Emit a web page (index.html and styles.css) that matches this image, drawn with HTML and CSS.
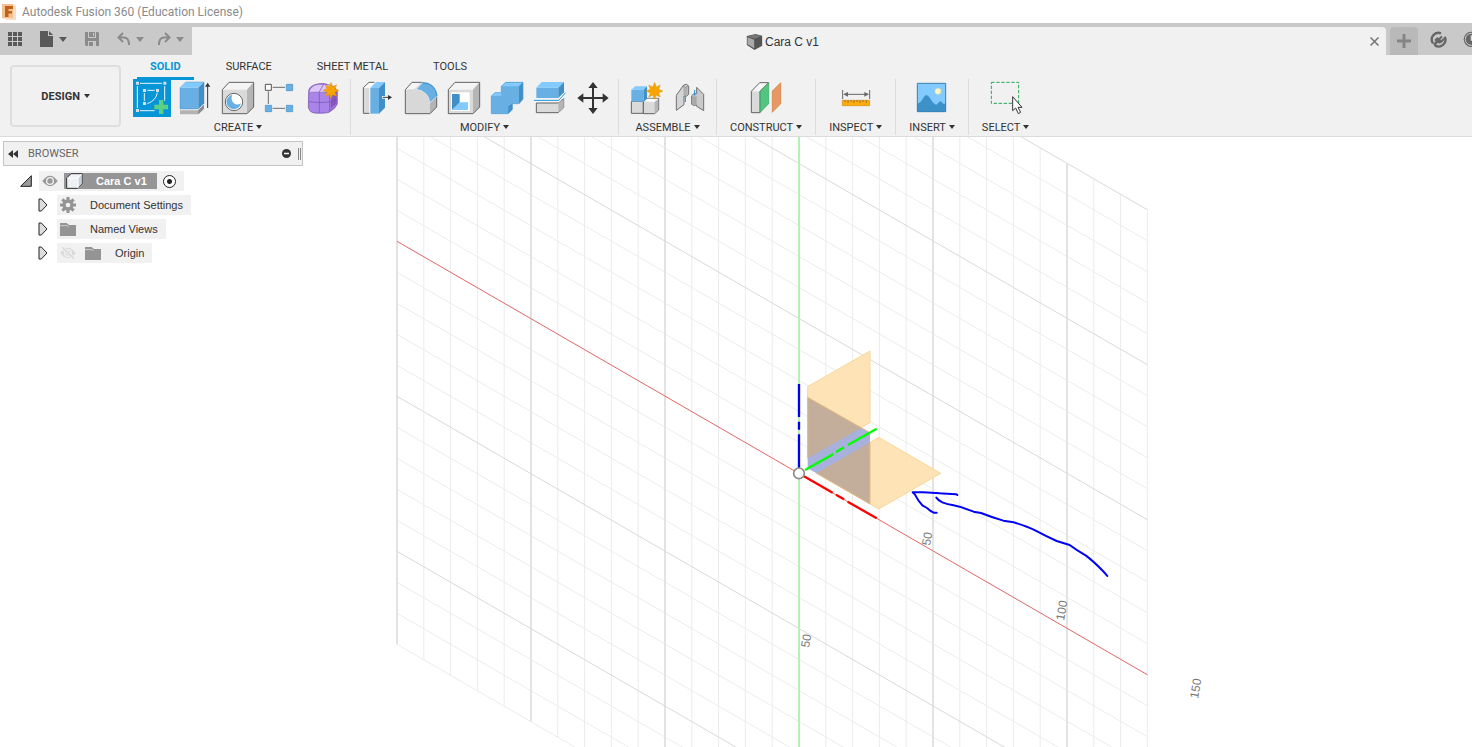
FILE: index.html
```html
<!DOCTYPE html>
<html lang="en">
<head>
<meta charset="utf-8">
<meta name="viewport" content="width=device-width, initial-scale=1">
<title>Autodesk Fusion 360 (Education License)</title>
<link rel="stylesheet" href="styles.css">
</head>
<body>
<header class="titlebar">
  <svg class="app-icon" viewBox="0 0 16 18" aria-hidden="true"><rect x="1" y="1" width="11" height="14" fill="#f3c094"/><path d="M12 1l3 2v14H6l-5-2h11z" fill="#f8dcc4"/><path d="M4 3h8v3H7.500v2H11v2.500H7.500V14H4z" fill="#bf6119"/></svg>
  <span>Autodesk Fusion 360 (Education License)</span>
</header>

<div class="quickbar">
  <div class="quick-tools">
    <button class="quick" aria-label="Data panel"><svg width="14" height="14" viewBox="0 0 14 14" fill="#595959"><path d="M0 0h4v4H0zM5 0h4v4H5zM10 0h4v4h-4zM0 5h4v4H0zM5 5h4v4H5zM10 5h4v4h-4zM0 10h4v4H0zM5 10h4v4H5zM10 10h4v4h-4z"/></svg></button>
    <button class="quick file" aria-label="File"><svg width="14" height="16" viewBox="0 0 14 16" fill="#595959"><path d="M0 0h8v5h5v11H0zM9 0l4 4H9z"/></svg><i class="caret dark"></i></button>
    <button class="quick save" aria-label="Save"><svg width="14" height="14" viewBox="0 0 14 14"><path d="M0 0h13l1 1v13H1l-1-1z" fill="#8b8b8b"/><path d="M3 0h8v6H3zM3 9h8v5H3z" fill="#c9c9c9"/><path d="M4 0h6v5H4zM4 10h4v4H4z" fill="#8b8b8b"/><path d="M8 1h1v3H8z" fill="#c9c9c9"/></svg></button>
    <button class="quick" aria-label="Undo"><svg width="14" height="14" viewBox="0 0 14 14" fill="none" stroke="#8b8b8b" stroke-width="2"><path d="M6 1L1.500 5.500 6 10M2 5.500h5.500Q12 6 12 13"/></svg><i class="caret"></i></button>
    <button class="quick redo" aria-label="Redo"><svg width="14" height="14" viewBox="0 0 14 14" fill="none" stroke="#8b8b8b" stroke-width="2"><path d="M8 1l4.500 4.500L8 10M12 5.500H6.500Q2 6 2 13"/></svg><i class="caret"></i></button>
  </div>
  <div class="doc-tab">
    <div class="doc-name"><svg width="17" height="16" viewBox="0 0 50 48" aria-hidden="true"><path d="M2 6L28 0l20 5v30L25 48 2 33z" fill="#555"/><path d="M4 10l20 7v26L4 31z" fill="#a9a9a9"/><path d="M4 7l24-5 18 4-21 8z" fill="#777"/></svg><span>Cara C v1</span></div>
    <button class="close" aria-label="Close tab"><svg width="9" height="9" viewBox="0 0 9 9" stroke="#747474" stroke-width="1.500"><path d="M.5.5l8 8M8.500.5l-8 8"/></svg></button>
  </div>
  <button class="new-tab" aria-label="New tab"><svg width="14" height="14" viewBox="0 0 14 14"><path d="M5.500 0h3v5.500H14v3H8.500V14h-3V8.500H0v-3h5.500z" fill="#858585"/></svg></button>
  <div class="status-tools">
    <button class="quick" aria-label="Extensions"><svg width="17" height="17" viewBox="0 0 51 51"><path d="M9 37A20 20 0 0 1 33 7M44 17A20 20 0 0 1 14 42" fill="none" stroke="#666" stroke-width="7"/><path d="M13 27l9-9 4 4 8-8 4 4-7 8 2 2 8-7 4 4-8 8q-6 7-14 3l-9 8-5-5 8-8z" fill="#666"/></svg></button>
    <button class="quick" aria-label="Job status"><svg width="17" height="17" viewBox="0 0 51 51"><circle cx="25" cy="25" r="23" fill="#666"/><circle cx="25" cy="25" r="18" fill="none" stroke="#c9c9c9" stroke-width="3"/><path d="M25 13v14h10" fill="none" stroke="#d9d9d9" stroke-width="4"/></svg></button>
  </div>
</div>

<div class="ribbon">
  <button class="design">DESIGN <i class="caret ink"></i></button>
  <div class="ribbon-body">
    <nav class="tabs">
      <a class="tab active" href="#solid">SOLID</a><a class="tab" href="#surface">SURFACE</a><a class="tab" href="#sheet-metal">SHEET METAL</a><a class="tab" href="#tools">TOOLS</a>
    </nav>
    <div class="groups">
      <section class="group">
        <div class="tools">
          <button class="tool" aria-label="Create sketch"><svg viewBox="39 87 114 114"><path fill="#0696d7" d="M39 87h114v114H39z"/><path d="M60 100h66M134 108v44M52 108v66M60 182h44M82 121h22M73 129v24M112 128q-4 24-30 33" fill="none" stroke="#eaf4fa" stroke-width="3"/><path d="M48 95h9v9h-9zM130 95h9v9h-9zM48 177h9v9h-9zM69 117h9v9h-9zM108 117h9v9h-9zM69 156h9v9h-9z" fill="#d8dde2"/><path d="M117 150h13v14h14v14h-14v14h-13v-14h-14v-14h14z" fill="#5bd283"/></svg></button>
          <button class="tool" aria-label="Extrude"><svg viewBox="168 87 114 114"><path d="M180 181h55l17-17v12l-17 17h-55z" fill="#b3b3b3"/><path d="M235 181l17-17v12l-17 17z" fill="#8c8c8c"/><path d="M180 113h55v64h-55z" fill="#68b0e3"/><path d="M180 113l17-17h55l-17 17z" fill="#82caff"/><path d="M235 113l17-17v64l-17 17z" fill="#418fc7"/><path d="M180 177v-64l17-17h55v64l-17 17z" fill="none" stroke="#3b82b5" stroke-width="1"/><path d="M263 174v-68" stroke="#333" stroke-width="3"/><path d="M255 110l8-12 8 12z" fill="#333"/></svg></button>
          <button class="tool" aria-label="Hole"><svg viewBox="297 87 114 114"><path d="M307 119l20-22h74v74l-20 20h-74z" fill="#dadada"/><path d="M307 119l20-22h74l-20 22z" fill="#f4f4f4"/><path d="M381 119l20-22v74l-20 20z" fill="#b5b5b5"/><path d="M307 119l20-22h74v74l-20 20h-74z" fill="none" stroke="#636363" stroke-width="3"/><circle cx="342" cy="156" r="26" fill="#fff" stroke="#636363" stroke-width="3"/><path d="M337 134a22 22 0 1 0 26 26q-13 8-23-2-9-10-3-24z" fill="#68b0e3"/></svg></button>
          <button class="tool" aria-label="Rectangular pattern"><svg viewBox="426 87 114 114"><path d="M458 112h37M445 124v38M458 175h37" stroke="#6b6b6b" stroke-width="3"/><path d="M436 103h18v18h-18z" fill="#fff" stroke="#555" stroke-width="3"/><path d="M499 103h19v19h-19zM436 166h19v19h-19zM499 166h19v19h-19z" fill="#68b0e3" stroke="#418fc7" stroke-width="2"/></svg></button>
          <button class="tool" aria-label="Create form"><svg viewBox="555 87 114 114"><path d="M566 121q2-11 18-17 25-7 40 0 22 3 28 20v38q-5 14-25 25-13 4-45 2-14-3-17-16z" fill="#9d72d9" stroke="#7650ad" stroke-width="2"/><path d="M568 125q5-18 27-21l30 1q14 4 16 13l-15 14-50 1z" fill="#dcc5fb"/><path d="M568 133q0-5 12-5h44q7 0 7 8v40q-3 10-14 11h-33q-14-2-16-11z" fill="#a985ea"/><path d="M634 132l16-10v38l-17 14z" fill="#8655c0"/><path d="M598 128v60M567 155q30 5 62 1l21-8M629 128v55M571 127h56l14-7M597 127l14-24" fill="none" stroke="#7650ad" stroke-width="2"/><path d="M633 97l5 13 12-6-5 12 12 5-12 6 5 12-12-5-5 12-5-12-12 5 5-12-12-6 12-5-5-12 12 6z" fill="#f7a400" stroke="#d98600" stroke-width="1"/></svg></button>
        </div>
        <button class="menu">CREATE<i class="caret ink"></i></button>
      </section>
      <section class="group">
        <div class="tools">
          <button class="tool" aria-label="Press pull"><svg viewBox="24 87 114 114"><path d="M57 113v77H40v-77l17-16h15z" fill="#dadada"/><path d="M40 113l17-16h17l-15 16z" fill="#fff"/><path d="M58 190H40v-77l17-16h16" fill="none" stroke="#636363" stroke-width="3"/><path d="M61 114h26v77H61z" fill="#68b0e3"/><path d="M61 114l17-18h27l-18 18z" fill="#82caff"/><path d="M87 114l18-18v77l-18 18z" fill="#418fc7"/><path d="M96 142h22" stroke="#fff" stroke-width="8"/><path d="M98 142h18" stroke="#333" stroke-width="3"/><path d="M114 135l12 7-12 8z" fill="#333"/></svg></button>
          <button class="tool" aria-label="Fillet"><svg viewBox="153 87 114 114"><path d="M166 119l20-22h28q44 0 46 42v32l-20 20h-74z" fill="#d8d8d8"/><path d="M166 119l20-22h28l-20 20z" fill="#f6f6f6"/><path d="M240 158l20-18v31l-20 20z" fill="#b5b5b5"/><path d="M166 119l20-22h28q44 0 46 42v32l-20 20h-74z" fill="none" stroke="#636363" stroke-width="3"/><path d="M199 118l21-23q38 4 43 43l-23 20q-5-34-41-40z" fill="#68b0e3" stroke="#eee" stroke-width="2"/><path d="M218 98q38 2 43 40" fill="none" stroke="#418fc7" stroke-width="3"/></svg></button>
          <button class="tool" aria-label="Shell"><svg viewBox="282 87 114 114"><path d="M295 119l20-22h74v74l-20 20h-74z" fill="#dadada"/><path d="M295 119l20-22h74l-20 22z" fill="#f4f4f4"/><path d="M369 119l20-22v74l-20 20z" fill="#b5b5b5"/><path d="M295 119l20-22h74v74l-20 20h-74z" fill="none" stroke="#636363" stroke-width="3"/><path d="M303 127h56v56h-56z" fill="#fff"/><path d="M306 132h23v26l-23 22z" fill="#418fc7"/><path d="M306 180l23-23h25v23z" fill="#82caff"/></svg></button>
          <button class="tool" aria-label="Combine"><svg viewBox="411 87 114 114"><path d="M424 138l11-10h19v-19l13-12h52v50l-12 14h-20v17l-12 13h-51z" fill="#68b0e3"/><path d="M424 138l11-10h19v9zM454 109l13-12h52l-12 12z" fill="#82caff"/><path d="M507 109l12-12v50l-12 14zM475 168l12-7v17l-12 13z" fill="#418fc7"/><path d="M424 138l11-10h19v-19l13-12h52v50l-12 14h-20v17l-12 13h-51z" fill="none" stroke="#4c9bd0" stroke-width="2"/></svg></button>
          <button class="tool" aria-label="Split body"><svg viewBox="540 87 114 114"><path d="M559 113h66v31h-66z" fill="#68b0e3"/><path d="M559 113l16-17h67l-17 17z" fill="#82caff"/><path d="M625 113l17-17v31l-17 17z" fill="#418fc7"/><path d="M559 159h66l16-13v27l-16 15h-66z" fill="#dadada" stroke="#636363" stroke-width="3"/><path d="M625 160l16-14v27l-16 15z" fill="#b5b5b5"/><path d="M552 151h74l21-23" fill="none" stroke="#fff" stroke-width="7"/><path d="M552 151h74l21-23" fill="none" stroke="#168dda" stroke-width="3"/></svg></button>
          <button class="tool" aria-label="Move"><svg viewBox="669 87 114 114"><path d="M729 108v72M693 144h72" stroke="#333" stroke-width="6"/><path d="M729 96l14 18h-28zM729 192l14-18h-28zM682 144l18-14v28zM776 144l-18-14v28z" fill="#333"/></svg></button>
        </div>
        <button class="menu">MODIFY<i class="caret ink"></i></button>
      </section>
      <section class="group assemble">
        <div class="tools">
          <button class="tool" aria-label="New component"><svg viewBox="36 27 114 114"><path d="M49 94h36v36H49z" fill="#dadada" stroke="#636363" stroke-width="3"/><path d="M85 94l10-9h36v35l-12 11H85z" fill="#dadada" stroke="#636363" stroke-width="3"/><path d="M86 94l10-8h34l-12 10z" fill="#fff"/><path d="M119 96l11-9v33l-11 10z" fill="#b5b5b5"/><path d="M49 59h37v36H49z" fill="#68b0e3"/><path d="M49 59l12-10h35L86 59z" fill="#82caff"/><path d="M86 59l10-10v37l-10 9z" fill="#418fc7"/><path d="M119 37l5 14 12-6-5 13 13 5-13 6 5 12-12-5-5 12-6-12-12 5 5-12-13-6 13-5-5-13 12 6z" fill="#f7a400" stroke="#d98600" stroke-width="1"/></svg></button>
          <button class="tool" aria-label="Joint"><svg viewBox="165 27 114 114"><path d="M184 121V76l22-31 9-2 6 5v25l-6 5h-8v26z" fill="#d4d4d4" stroke="#707070" stroke-width="3"/><path d="M205 51q6 5 13 0v24h-12z" fill="#b0b0b0"/><path d="M205 49q7 6 14-1" fill="none" stroke="#666" stroke-width="2"/><path d="M266 122V73l-21-21v19l-10 1-5 5v26l6 3 9-1v4z" fill="#c9c9c9" stroke="#707070" stroke-width="3"/><path d="M231 78q7 3 14 0v25q-6 3-13 0z" fill="#a8a8a8"/><path d="M211 78v18M239 60v17" stroke="#168dda" stroke-width="3"/></svg></button>
        </div>
        <button class="menu">ASSEMBLE<i class="caret ink"></i></button>
      </section>
      <section class="group">
        <div class="tools">
          <button class="tool" aria-label="Offset plane"><svg viewBox="396 27 114 114"><path d="M409 64h27v64h-27z" fill="#dadada"/><path d="M409 64l25-26h27l-25 26z" fill="#f7f7f7"/><path d="M461 38l-26 26v64h-26V64l25-26z" fill="none" stroke="#636363" stroke-width="3"/><path d="M436 64l25-25v62l-25 26z" fill="#52c681" stroke="#2da35a" stroke-width="2"/><path d="M472 63l25-25v63l-25 26z" fill="#e89862" stroke="#d37836" stroke-width="2"/></svg></button>
        </div>
        <button class="menu">CONSTRUCT<i class="caret ink"></i></button>
      </section>
      <section class="group">
        <div class="tools">
          <button class="tool" aria-label="Measure"><svg viewBox="63 27 114 114"><path d="M80 60v27M161 60v27M88 73h66" stroke="#666" stroke-width="3"/><path d="M82 73l14-7v14zM159 73l-14-7v14z" fill="#666"/><path d="M79 91h82v16H79z" fill="#ffab09" stroke="#d98700" stroke-width="2"/><path d="M87 91v5M96 91v8M105 91v5M114 91v8M123 91v5M132 91v8M141 91v5M151 91v8" stroke="#555" stroke-width="2"/></svg></button>
        </div>
        <button class="menu">INSPECT<i class="caret ink"></i></button>
      </section>
      <section class="group">
        <div class="tools">
          <button class="tool" aria-label="Insert image"><svg viewBox="285 27 114 114"><path d="M298 40h85v85h-85z" fill="#82caff"/><path d="M298 102q10-4 18-18 8-18 20 0 9 17 18 20 4 0 7-6 7-9 12 0 4 7 10 0v27h-85z" fill="#3d91c9"/><path d="M298 40h85v85h-85z" fill="none" stroke="#3580b4" stroke-width="3"/><circle cx="360" cy="64" r="9" fill="#fff7bf" stroke="#dfe0a7" stroke-width="2"/></svg></button>
        </div>
        <button class="menu">INSERT<i class="caret ink"></i></button>
      </section>
      <section class="group">
        <div class="tools">
          <button class="tool" aria-label="Select"><svg viewBox="498 27 114 114"><path d="M511 37h82v63h-82z" fill="none" stroke="#20ab56" stroke-width="3" stroke-dasharray="10 5"/><path d="M575 80v42l9-8 8 17 7-4-8-15h12z" fill="#fff" stroke="#333" stroke-width="3"/></svg></button>
        </div>
        <button class="menu">SELECT<i class="caret ink"></i></button>
      </section>
    </div>
  </div>
</div>

<main class="workspace">
  <svg class="canvas" viewBox="0 137 1472 610" preserveAspectRatio="xMidYMid slice" aria-label="Sketch grid with origin planes">
    <!-- Isometric grid: one unit is one minor grid square -->
    <g transform="matrix(26.8 15.480 0 31 799 473.500)" fill="none">
      <path class="minor" d="M-14-15v28M-13-15v28M-12-15v28M-11-15v28M-9-15v28M-8-15v28M-7-15v28M-6-15v28M-4-15v28M-3-15v28M-2-15v28M-1-15v28M1-15v28M2-15v28M3-15v28M4-15v28M6-15v28M7-15v28M8-15v28M9-15v28M11-15v28M12-15v28M13-15v28"/>
      <path class="minor" d="M-15-14h28M-15-13h28M-15-12h28M-15-11h28M-15-9h28M-15-8h28M-15-7h28M-15-6h28M-15-4h28M-15-3h28M-15-2h28M-15-1h28M-15 1h28M-15 2h28M-15 3h28M-15 4h28M-15 6h28M-15 7h28M-15 8h28M-15 9h28M-15 11h28M-15 12h28M-15 13h28"/>
      <path class="major" d="M-15-15v28M-10-15v28M-5-15v28M5-15v28M10-15v28"/>
      <path class="major slanted" d="M-15-15h28M-15-10h28M-15-5h28M-15 5h28M-15 10h28"/>
      <path class="axis-x" d="M-15 0h28"/>
      <path class="axis-y" d="M0-15v28"/>
    </g>
    <!-- Origin planes and axes -->
    <g transform="translate(780 340) scale(.3333)">
      <g opacity=".94">
        <path d="M83 140L270 33v215L83 355zM296 292l186 108-186 107-186-107z" fill="#fee2b3" stroke="#fbd390" stroke-width="3"/>
        <path d="M83 172l187 106v214L83 385z" fill="#a3add9"/>
        <path d="M83 172l161 91L83 355zM110 400l160-93v185z" fill="#bfaa95"/>
        <path d="M83 355V172l187 106M270 307v185L110 400" fill="none" stroke="#e8b877" stroke-width="3"/>
      </g>
      <path d="M57 132v99M57 245v24M57 283v102" stroke="#0000f5" stroke-width="7"/>
      <path d="M75 390l85-48M168 336l24-14M204 315l86-49" stroke="#0f0" stroke-width="7"/>
      <path d="M72 409l86 49M168 464l24 14M203 485l87 50" stroke="#f00" stroke-width="7"/>
      <circle cx="57" cy="400" r="16" fill="#fff" stroke="#8c8c8c" stroke-width="5"/>
    </g>
    <!-- Freehand arrow -->
    <path transform="translate(880 470) scale(.3333)" class="pen" d="M232 75l-3-2-28-2-22-1-24-2-26-1H98l7 7q10 20 22 32l14 8q12 11 20 14h9M169 83q6 9 18 14 17 6 30 8l22 5q25 9 42 15l22 4q33 13 67 23l31 5q40 12 66 25 28 15 63 31l39 12q20 15 49 32 20 15 48 43 9 9 16 18"/>
    <g class="dims">
      <text transform="translate(930 546) rotate(-80)">50</text>
      <text transform="translate(1064 621) rotate(-80)">100</text>
      <text transform="translate(1198 699) rotate(-80)">150</text>
      <text transform="translate(809 648) rotate(-80)">50</text>
    </g>
  </svg>

  <aside class="browser">
    <div class="browser-head">
      <button class="bare" aria-label="Collapse"><svg width="10" height="8" viewBox="0 0 10 8" fill="#333"><path d="M5 0v8L0 4zM10 0v8L5 4z"/></svg></button>
      <span class="browser-title">BROWSER</span>
      <button class="bare" aria-label="Hide"><svg width="9" height="9" viewBox="0 0 9 9"><circle cx="4.500" cy="4.500" r="4.500" fill="#333"/><path d="M2 4.500h5" stroke="#fff" stroke-width="1.500"/></svg></button>
      <span class="grip"></span>
    </div>
    <ul class="tree">
      <li class="node root">
        <button class="bare toggle" aria-label="Collapse Cara C v1"><svg width="12" height="12" viewBox="0 0 36 36"><path d="M34 2v32H2z" fill="#999" stroke="#222" stroke-width="3"/></svg></button>
        <div class="chip">
          <svg width="16" height="12" viewBox="0 0 48 36"><path d="M1 18Q24-13 47 18 24 49 1 18z" fill="#999"/><circle cx="24" cy="18" r="12" fill="#f1f1f1"/><circle cx="24" cy="18" r="8" fill="#999"/></svg>
          <span class="selected"><svg width="17" height="16" viewBox="0 0 51 48"><path d="M2 15L15 2h33v31L35 46H2z" fill="#edf1f6" stroke="#333" stroke-width="3"/><path d="M36 15L47 4v29L36 44z" fill="#c9d0d9"/><path d="M3 15h33v30M36 15L47 3" fill="none" stroke="#fff" stroke-width="3"/></svg><b>Cara C v1</b></span>
          <input class="activate" type="radio" name="active-component" aria-label="Activate Cara C v1" checked>
        </div>
      </li>
      <li class="node">
        <button class="bare toggle" aria-label="Expand Document Settings"><svg width="10" height="14" viewBox="0 0 30 42"><path d="M3 3h7l17 18-17 18H3z" fill="#ddd" stroke="#222" stroke-width="3"/></svg></button>
        <div class="chip"><svg width="16" height="16" viewBox="0 0 48 48"><circle cx="24" cy="24" r="12" fill="none" stroke="#949494" stroke-width="10"/><path d="M24 0v10M24 38v10M0 24h10M38 24h10M7 7l7 7M34 34l7 7M7 41l7-7M34 14l7-7" stroke="#949494" stroke-width="9"/></svg><span>Document Settings</span></div>
      </li>
      <li class="node">
        <button class="bare toggle" aria-label="Expand Named Views"><svg width="10" height="14" viewBox="0 0 30 42"><path d="M3 3h7l17 18-17 18H3z" fill="#ddd" stroke="#222" stroke-width="3"/></svg></button>
        <div class="chip"><svg width="16" height="13" viewBox="0 0 48 39" fill="#949494"><path d="M0 0h20l7 6h21v33H0z"/><path d="M0 8h21l5 4" fill="none" stroke="#ccc" stroke-width="3"/></svg><span>Named Views</span></div>
      </li>
      <li class="node origin">
        <button class="bare toggle" aria-label="Expand Origin"><svg width="10" height="14" viewBox="0 0 30 42"><path d="M3 3h7l17 18-17 18H3z" fill="#ddd" stroke="#222" stroke-width="3"/></svg></button>
        <div class="chip"><svg width="16" height="12" viewBox="0 0 48 36"><path d="M1 18Q24-13 47 18 24 49 1 18z" fill="#dadada"/><circle cx="24" cy="18" r="12" fill="#f1f1f1"/><circle cx="24" cy="18" r="8" fill="#dadada"/><path d="M7 1l35 34" stroke="#f1f1f1" stroke-width="9"/><path d="M7 1l35 34" stroke="#d6d6d6" stroke-width="4"/></svg><svg width="16" height="13" viewBox="0 0 48 39" fill="#949494"><path d="M0 0h20l7 6h21v33H0z"/><path d="M0 8h21l5 4" fill="none" stroke="#ccc" stroke-width="3"/></svg><span>Origin</span></div>
      </li>
    </ul>
  </aside>
</main>
</body>
</html>
```
FILE: styles.css
```css
* { box-sizing: border-box; }

html, body { height: 100%; }

body {
  margin: 0;
  display: flex;
  flex-direction: column;
  overflow: hidden;
  background: #fff;
  color: #333;
  font: 11px/14px Roboto, "Liberation Sans", sans-serif;
}

button {
  margin: 0;
  padding: 0;
  border: 0;
  background: none;
  color: inherit;
  font: inherit;
}

svg { display: block; flex: none; }

.titlebar {
  display: flex;
  align-items: center;
  gap: 5px;
  flex: none;
  height: 23px;
  padding-left: 1px;
  color: #8a8a8a;
  font: 12px/16px Roboto, "Noto Sans", sans-serif;
}
.app-icon { width: 16px; height: 18px; }

.caret {
  display: inline-block;
  border: 4px solid transparent;
  border-top: 5px solid #8b8b8b;
  border-bottom: 0;
}
.caret.dark { border-top-color: #595959; }
.caret.ink {
  margin-left: 3px;
  border-width: 4px 3px 0;
  border-top-color: #333;
  vertical-align: 2px;
}

/* Quick access bar and document tabs */
.quickbar {
  display: flex;
  flex: none;
  height: 32px;
  padding-top: 4px;
  overflow: hidden;
  background: #c9c9c9;
}
.quick-tools {
  display: flex;
  align-items: center;
  width: 192px;
  flex: none;
  padding: 0 7px 4px 8px;
  gap: 18px;
}
.quick { display: flex; align-items: center; gap: 5px; flex: none; }
.quick-tools .redo { margin-left: -5px; }
.doc-tab {
  display: flex;
  flex: 1;
  align-items: center;
  padding: 1px 7px 0 3px;
  border-radius: 0 4px 0 0;
  background: #f1f1f1;
  color: #333;
  font: 12px/16px "Liberation Sans", Arial, sans-serif;
}
.doc-name {
  display: flex;
  flex: 1;
  align-items: center;
  justify-content: center;
  gap: 2px;
}
.new-tab {
  display: grid;
  place-items: center;
  width: 28px;
  margin-left: 4px;
  border-radius: 4px 4px 0 0;
  background: #b9b9b9;
}
.status-tools {
  display: flex;
  align-items: center;
  gap: 16px;
  width: 54px;
  flex: none;
  padding: 0 0 4px 12px;
}

/* Ribbon */
.ribbon {
  display: flex;
  flex: none;
  height: 82px;
  border-bottom: 1px solid #dcdcdc;
  background: #f1f1f1;
}
.design {
  align-self: flex-start;
  width: 111px;
  height: 62px;
  flex: none;
  margin: 10px 6px 0 10px;
  padding-top: 2px;
  border: 2px solid #dedede;
  border-radius: 4px;
  font-weight: 700;
}
.design .caret { margin-left: 1px; }
.ribbon-body { flex: 1; min-width: 0; }
.tabs { display: flex; gap: 19px; padding: 5px 0 0 10px; }
.tab {
  padding: 0 13px 3px;
  border-bottom: 3px solid transparent;
  color: #333;
  text-decoration: none;
}
.tab.active { border-color: #0696d7; color: #0696d7; font-weight: 700; }
.groups { display: flex; margin-top: -1px; }
.group {
  display: flex;
  flex-direction: column;
  align-items: center;
}
.group:not(:last-child) { border-right: 1px solid #dcdcdc; }
.group:first-child { margin-left: -1px; }
.tools { display: flex; gap: 5px; padding: 0 7px; }
.assemble .tools { padding: 0 8px; }
.tool { width: 38px; height: 38px; }
.tool svg { width: 38px; height: 38px; }
.menu { padding: 4px 13px 0; white-space: nowrap; }

/* Modelling canvas */
.workspace { position: relative; flex: 1; min-height: 0; }
.canvas { width: 100%; height: 100%; }
.minor, .major, .axis-x, .axis-y { vector-effect: non-scaling-stroke; stroke-width: 1; }
.minor { stroke: #ececec; }
.major { stroke: #e3e3e3; stroke-width: 2; }
.slanted { stroke: #d9d9d9; stroke-width: 1; }
.axis-x { stroke: #e06666; }
.axis-y { stroke: #b4f2b4; stroke-width: 2; }
.pen {
  fill: none;
  stroke: #0000f5;
  stroke-width: 6;
  stroke-linecap: round;
  stroke-linejoin: round;
}
.dims { fill: #777; font: 12px "Liberation Sans", Arial, sans-serif; }

/* Browser panel */
.browser { position: absolute; top: 4px; left: 3px; width: 300px; }
.browser-head {
  display: flex;
  align-items: center;
  height: 25px;
  padding: 0 1px 0 4px;
  border: 1px solid #c4c4c4;
  background: #f1f1f1;
}
.browser-title { flex: 1; margin-left: 10px; color: #666; }
.grip {
  width: 3px;
  height: 12px;
  margin-left: 7px;
  border: 1px solid #888;
  border-width: 0 1px;
}
.tree {
  display: grid;
  gap: 4px;
  margin: 5px 0 0;
  padding: 0;
  list-style: none;
  color: #333;
  font: 11px/14px "Liberation Sans", Arial, sans-serif;
}
.node { display: flex; align-items: center; height: 20px; padding-left: 35px; }
.root { padding-left: 17px; }
.toggle { width: 19px; }
.chip {
  display: flex;
  align-items: center;
  gap: 14px;
  height: 20px;
  padding: 0 8px 0 3px;
  background: #f1f1f1;
}
.root .chip { gap: 6px; }
.origin .chip { gap: 9px; }
.origin .chip span { margin-left: 5px; }
.selected {
  display: flex;
  align-items: center;
  gap: 13px;
  height: 16px;
  padding: 0 10px 0 2px;
  background: #959595;
  color: #fff;
}
.activate {
  appearance: none;
  width: 13px;
  height: 13px;
  margin: 0;
  border: 1px solid #222;
  border-radius: 50%;
  background: radial-gradient(circle, #222 0 2px, #fff 3px);
}
```
